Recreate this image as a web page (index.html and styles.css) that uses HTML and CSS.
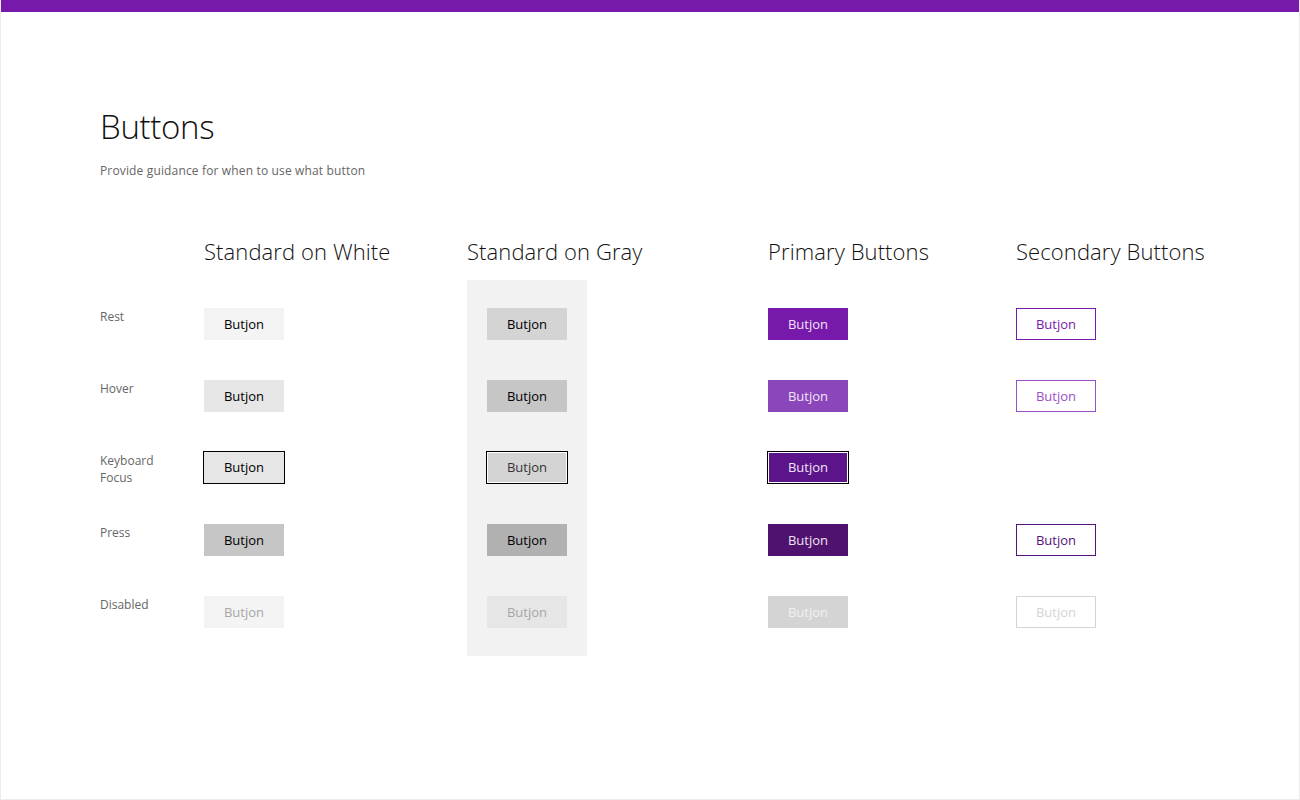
FILE: index.html
```html
<!DOCTYPE html>
<html lang="en">
<head>
<meta charset="utf-8">
<title>Buttons</title>
<link rel="stylesheet" href="styles.css">
</head>
<body>
<div class="frame">
  <div class="topbar"></div>
  <main class="content">
    <h1 class="title">Buttons</h1>
    <p class="subtitle">Provide guidance for when to use what button</p>

    <div class="matrix">
      <div class="col col-labels">
        <div class="col-head"></div>
        <div class="stack">
          <div class="label">Rest</div>
          <div class="label">Hover</div>
          <div class="label">Keyboard<br>Focus</div>
          <div class="label">Press</div>
          <div class="label">Disabled</div>
        </div>
      </div>

      <div class="col col-white">
        <h2 class="col-head">Standard on White</h2>
        <div class="stack">
          <div class="btn sw-rest">Butjon</div>
          <div class="btn sw-hover">Butjon</div>
          <div class="btn sw-focus">Butjon</div>
          <div class="btn sw-press">Butjon</div>
          <div class="btn sw-disabled">Butjon</div>
        </div>
      </div>

      <div class="col col-gray">
        <h2 class="col-head">Standard on Gray</h2>
        <div class="stack gray-panel">
          <div class="btn sg-rest">Butjon</div>
          <div class="btn sg-hover">Butjon</div>
          <div class="btn sg-focus">Butjon</div>
          <div class="btn sg-press">Butjon</div>
          <div class="btn sg-disabled">Butjon</div>
        </div>
      </div>

      <div class="col col-primary">
        <h2 class="col-head">Primary Buttons</h2>
        <div class="stack">
          <div class="btn pr-rest">Butjon</div>
          <div class="btn pr-hover">Butjon</div>
          <div class="btn pr-focus">Butjon</div>
          <div class="btn pr-press">Butjon</div>
          <div class="btn pr-disabled">Butjon</div>
        </div>
      </div>

      <div class="col col-secondary">
        <h2 class="col-head">Secondary Buttons</h2>
        <div class="stack">
          <div class="btn se-rest">Butjon</div>
          <div class="btn se-hover">Butjon</div>
          <div class="btn-empty"></div>
          <div class="btn se-press">Butjon</div>
          <div class="btn se-disabled">Butjon</div>
        </div>
      </div>
    </div>
  </main>
</div>
</body>
</html>
```

FILE: styles.css
```css
* { box-sizing: border-box; }

html, body {
  margin: 0;
  padding: 0;
  background: #ffffff;
}

body {
  font-family: "Open Sans", "Noto Sans", "Liberation Sans", sans-serif;
  color: #000;
}

.frame {
  width: 1300px;
  height: 800px;
  border: 1px solid #ececec;
  border-top: none;
  overflow: hidden;
}

.topbar {
  height: 12px;
  background: #7719aa;
  margin: 0 -1px;
}

.content {
  padding: 93px 0 0 99px;
}

.title {
  margin: 0;
  font-size: 33px;
  font-weight: 300;
  line-height: 44px;
  color: #111;
  letter-spacing: -0.3px;
}

.subtitle {
  margin: 13px 0 0;
  font-size: 12px;
  line-height: 17px;
  color: #666;
  letter-spacing: 0.15px;
}

.matrix {
  display: flex;
  margin-top: 57px;
}

.col-labels { width: 104px; }
.col-white { width: 263px; }
.col-gray { width: 301px; }
.col-primary { width: 248px; }
.col-secondary { width: 260px; }

.col-head {
  margin: 0;
  height: 44px;
  font-size: 22px;
  font-weight: 300;
  line-height: 30px;
  color: #111;
  white-space: nowrap;
  letter-spacing: 0.1px;
}

.stack {
  display: flex;
  flex-direction: column;
  gap: 40px;
  padding: 28px 0;
  align-items: flex-start;
}

.gray-panel {
  width: 120px;
  padding: 28px 20px;
  background: #f2f2f2;
}

.label {
  height: 32px;
  font-size: 12px;
  line-height: 17px;
  color: #666;
}

.btn, .btn-empty {
  width: 80px;
  height: 32px;
  display: flex;
  align-items: center;
  justify-content: center;
  font-size: 13px;
  line-height: 1;
  border: 1px solid transparent;
}

/* Standard on white */
.sw-rest { background: #f4f4f4; color: #000; }
.sw-hover { background: #e6e6e6; color: #000; }
.sw-focus { background: #e6e6e6; color: #000; border-color: #000; width: 82px; height: 33px; margin: -1px 0 0 -1px; }
.sw-press { background: #c6c6c6; color: #000; }
.sw-disabled { background: #f4f4f4; color: #a6a6a6; }

/* Standard on gray */
.sg-rest { background: #d4d4d4; color: #000; }
.sg-hover { background: #c6c6c6; color: #000; }
.sg-focus { background: #d4d4d4; color: #333; border-color: #000; box-shadow: inset 0 0 0 1px #ffffff; width: 82px; height: 33px; margin: -1px 0 0 -1px; }
.sg-press { background: #b1b1b1; color: #000; }
.sg-disabled { background: #e6e6e6; color: #a6a6a6; }

/* Primary */
.pr-rest { background: #7719aa; color: #f1e4f6; }
.pr-hover { background: #8c46bc; color: #f1e4f6; }
.pr-focus { background: #5b1489; color: #f1e4f6; border-color: #000; box-shadow: inset 0 0 0 1px #ffffff; width: 82px; height: 33px; margin: -1px 0 0 -1px; }
.pr-press { background: #4f126e; color: #f1e4f6; }
.pr-disabled { background: #d4d4d4; color: #f1f1f1; }

/* Secondary */
.se-rest { background: #fff; color: #7719aa; border-color: #7719aa; }
.se-hover { background: #fff; color: #9a4fc8; border-color: #9a4fc8; }
.se-press { background: #fff; color: #55127a; border-color: #55127a; }
.se-disabled { background: #fff; color: #d4d4d4; border-color: #d4d4d4; }
```
